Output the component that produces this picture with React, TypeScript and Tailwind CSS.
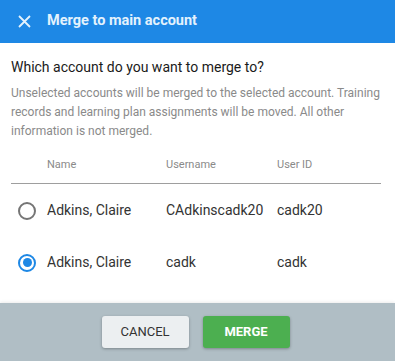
import React, { useState } from 'react';

interface Account {
  id: string;
  name: string;
  username: string;
  userId: string;
}

const accounts: Account[] = [
  { id: 'a', name: 'Adkins, Claire', username: 'CAdkinscadk20', userId: 'cadk20' },
  { id: 'b', name: 'Adkins, Claire', username: 'cadk', userId: 'cadk' },
];

const Radio: React.FC<{ checked: boolean; onClick: () => void }> = ({ checked, onClick }) => (
  <button
    onClick={onClick}
    className={`w-[18px] h-[18px] rounded-full border-2 flex items-center justify-center ${
      checked ? 'border-[#1e88e5]' : 'border-[#757575]'
    }`}
  >
    {checked && <span className="w-[9px] h-[9px] rounded-full bg-[#1e88e5]" />}
  </button>
);

const App: React.FC = () => {
  const [selected, setSelected] = useState('b');

  return (
    <div className="w-[395px] h-[361px] flex flex-col bg-white font-['Roboto',sans-serif] overflow-hidden">
      {/* header */}
      <div className="h-[43px] bg-[#1e88e5] flex items-center px-[18px] gap-[16px] shrink-0">
        <svg width="13" height="13" viewBox="0 0 13 13" className="shrink-0">
          <path d="M1 1L12 12M12 1L1 12" stroke="#e3f2fd" strokeWidth="1.8" />
        </svg>
        <h1 className="text-[14.5px] font-bold text-[#e3f2fd] leading-none">Merge to main account</h1>
      </div>

      {/* body */}
      <div className="flex-1 px-[11px] pt-[15px]">
        <h2 className="text-[14px] font-normal text-[#1a1a1a] leading-[18px]">
          Which account do you want to merge to?
        </h2>
        <p className="mt-[8px] text-[12px] leading-[19px] text-[#8a8a8a]">
          Unselected accounts will be merged to the selected account. Training records and learning plan
          assignments will be moved. All other information is not merged.
        </p>

        <div className="mt-[16px] grid grid-cols-[36px_119px_111px_1fr] text-[11px] text-[#8a8a8a] pb-[9px] border-b border-[#9e9e9e] mr-[3px]">
          <div />
          <div>Name</div>
          <div>Username</div>
          <div>User ID</div>
        </div>

        {accounts.map((a, i) => (
          <div
            key={a.id}
            className={`grid grid-cols-[36px_119px_111px_1fr] items-center text-[14px] text-[#333333] h-[52px] ${
              i === 0 ? 'mt-[1px]' : ''
            }`}
          >
            <div className="pl-[7px]">
              <Radio checked={selected === a.id} onClick={() => setSelected(a.id)} />
            </div>
            <div>{a.name}</div>
            <div>{a.username}</div>
            <div>{a.userId}</div>
          </div>
        ))}
      </div>

      {/* footer */}
      <div className="h-[58px] bg-[#b0bec5] flex justify-center items-start pt-[13px] pr-[4px] gap-[14px] shrink-0 shadow-[0_-1px_3px_rgba(0,0,0,0.08)]">
        <button className="w-[87px] h-[32px] rounded-[3px] bg-[#eceff1] text-[13px] text-[#333333] shadow-[0_1px_3px_rgba(0,0,0,0.3)]">
          CANCEL
        </button>
        <button className="w-[87px] h-[32px] rounded-[3px] bg-[#4caf50] text-[13px] font-bold text-white shadow-[0_1px_3px_rgba(0,0,0,0.3)]">
          MERGE
        </button>
      </div>
    </div>
  );
};

export default App;
